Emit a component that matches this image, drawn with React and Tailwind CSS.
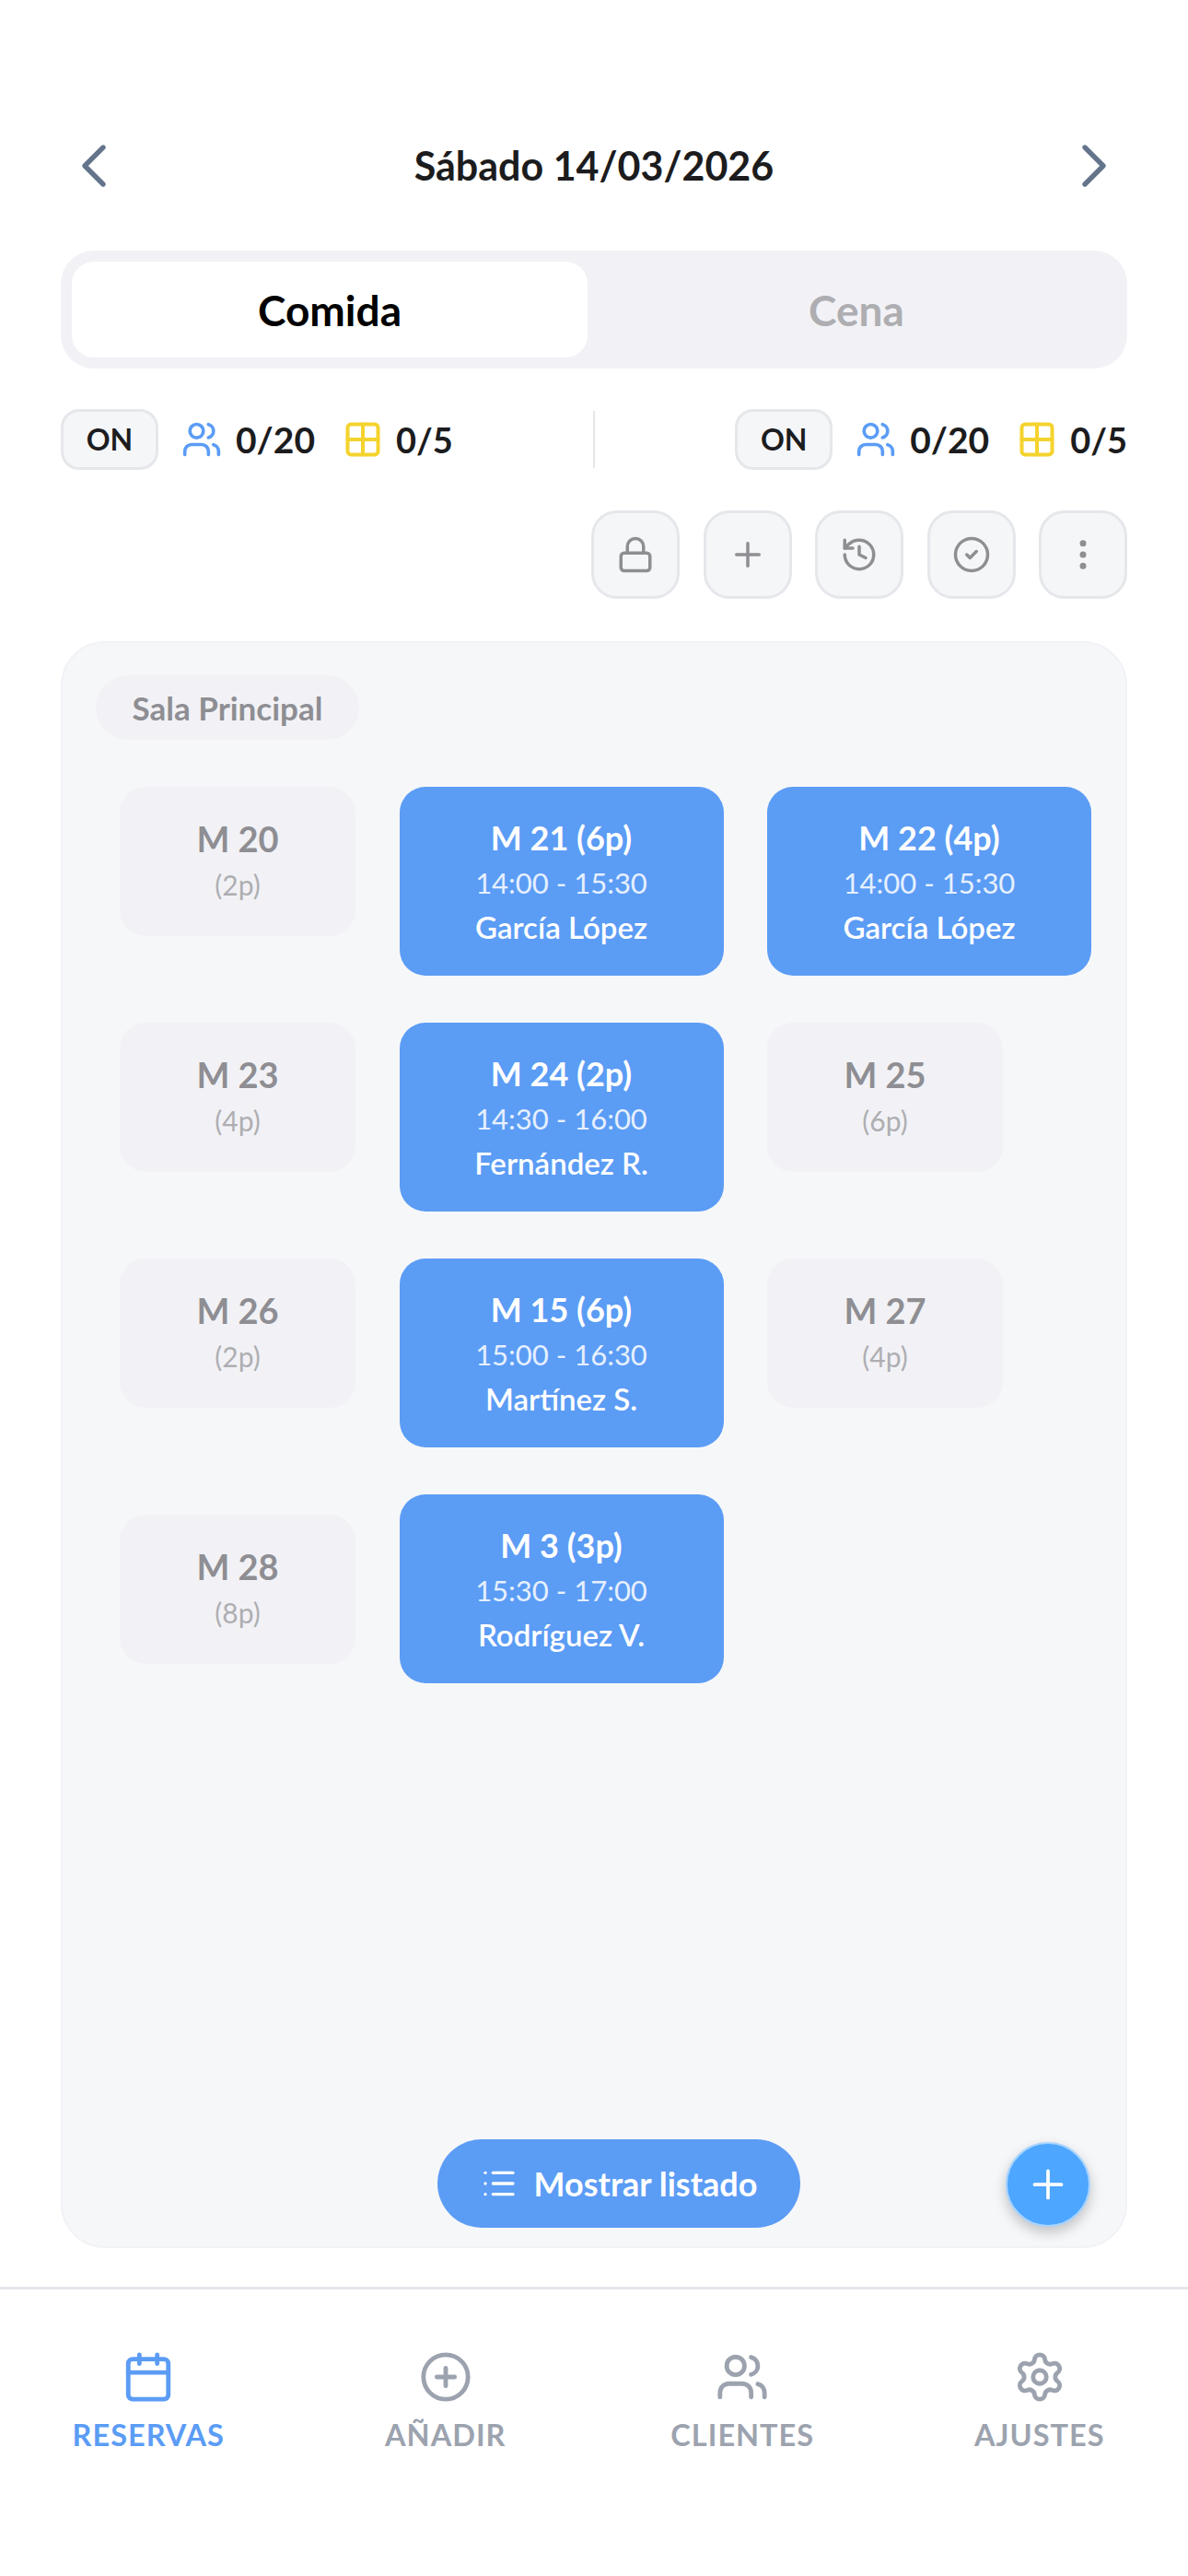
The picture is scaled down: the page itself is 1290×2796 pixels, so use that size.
import {
  Calendar,
  ChevronLeft,
  ChevronRight,
  CircleCheck,
  CirclePlus,
  EllipsisVertical,
  Grid2x2,
  History,
  List,
  Lock,
  Plus,
  Settings,
  Users,
} from "lucide-react";

const rows = [
  [
    { name: "M 20", seats: "(2p)" },
    { name: "M 21 (6p)", time: "14:00 - 15:30", guest: "García López" },
    { name: "M 22 (4p)", time: "14:00 - 15:30", guest: "García López" },
  ],
  [
    { name: "M 23", seats: "(4p)" },
    { name: "M 24 (2p)", time: "14:30 - 16:00", guest: "Fernández R." },
    { name: "M 25", seats: "(6p)" },
  ],
  [
    { name: "M 26", seats: "(2p)" },
    { name: "M 15 (6p)", time: "15:00 - 16:30", guest: "Martínez S." },
    { name: "M 27", seats: "(4p)" },
  ],
  [
    { name: "M 28", seats: "(8p)", center: true },
    { name: "M 3 (3p)", time: "15:30 - 17:00", guest: "Rodríguez V." },
  ],
];

const actions = [Lock, Plus, History, CircleCheck, EllipsisVertical];

const navItems = [
  { label: "RESERVAS", icon: Calendar, active: true },
  { label: "AÑADIR", icon: CirclePlus },
  { label: "CLIENTES", icon: Users },
  { label: "AJUSTES", icon: Settings },
];

const Stats = () => (
  <div className="flex items-center">
    <span className="flex h-[66px] w-[106px] items-center justify-center rounded-[20px] border-[3px] border-[#e5e7eb] bg-[#f5f6f8] text-[32px] font-bold text-[#1c1c1e]">
      ON
    </span>
    <Users className="ml-[25px] h-[44px] w-[44px] text-[#5b9cf5]" strokeWidth={2} />
    <span className="ml-[15px] text-[39px] font-bold text-[#1c1c1e]">0/20</span>
    <Grid2x2 className="ml-[30px] h-[44px] w-[44px] text-[#f5d32e]" strokeWidth={2.2} />
    <span className="ml-[14px] text-[38px] font-bold text-[#1c1c1e]">0/5</span>
  </div>
);

const TableCard = ({ table }) => {
  if (table.time) {
    return (
      <div className="flex h-[205px] w-[352px] flex-col items-center justify-center rounded-[28px] bg-[#5b9cf5] text-white">
        <span className="text-[36px] font-bold leading-[50px]">{table.name}</span>
        <span className="text-[31px] leading-[48px] text-white/85">{table.time}</span>
        <span className="text-[33px] font-semibold leading-[48px]">{table.guest}</span>
      </div>
    );
  }
  return (
    <div
      className={`flex h-[162px] w-[256px] flex-col items-center justify-center rounded-[28px] bg-[#f2f2f6] ${
        table.center ? "self-center" : "self-start"
      }`}
    >
      <span className="text-[38px] font-bold leading-[50px] text-[#8e8e93]">{table.name}</span>
      <span className="text-[30px] leading-[50px] text-[#aeaeb2]">{table.seats}</span>
    </div>
  );
};

export default function App() {
  return (
    <div
      className="flex h-[2796px] w-[1290px] flex-col bg-white"
      style={{ fontFamily: '"Lato", "Noto Sans", sans-serif' }}
    >
      <div className="flex h-[360px] flex-col px-[66px] pt-[140px]">
        <div className="-mx-[4px] flex h-[80px] items-center justify-between">
          <ChevronLeft className="h-[80px] w-[80px] text-[#64748b]" strokeWidth={1.6} />
          <h1 className="text-[43px] font-bold text-[#1c1c1e]">Sábado 14/03/2026</h1>
          <ChevronRight className="h-[80px] w-[80px] text-[#64748b]" strokeWidth={1.6} />
        </div>
        <div className="mt-[52px] flex h-[128px] shrink-0 rounded-[36px] bg-[#f2f2f6] p-[12px]">
          <div className="flex w-[560px] items-center justify-center rounded-[24px] bg-white text-[46px] font-bold text-black">
            Comida
          </div>
          <div className="flex flex-1 items-center justify-center pl-[10px] text-[46px] font-bold text-[#aeaeb2]">
            Cena
          </div>
        </div>
      </div>

      <div className="mt-[84px] flex h-[66px] items-center justify-between px-[66px]">
        <Stats />
        <div className="h-[62px] w-[2px] bg-[#e5e7eb]" />
        <Stats />
      </div>

      <div className="mt-[44px] flex justify-end gap-[25.5px] px-[66px]">
        {actions.map((Icon, i) => (
          <button
            key={i}
            className="flex h-[96px] w-[96px] items-center justify-center rounded-[28px] border-[3px] border-[#e5e7eb] bg-[#f5f6f8] text-[#8e8e93]"
          >
            <Icon className="h-[42px] w-[42px]" strokeWidth={2} />
          </button>
        ))}
      </div>

      <div className="relative mx-[66px] mt-[46px] h-[1744px] rounded-[48px] border-2 border-[#f2f2f6] bg-[#f6f7f9] pl-[36px] pt-[35px]">
        <span className="inline-flex h-[70px] w-[286px] items-center justify-center rounded-full bg-[#f2f2f6] text-[35px] font-bold text-[#8e8e93]">
          Sala Principal
        </span>
        <div className="ml-[26px] mt-[51px] flex flex-col gap-[51px]">
          {rows.map((row, i) => (
            <div key={i} className="flex gap-[47.5px]">
              {row.map((table) => (
                <TableCard key={table.name} table={table} />
              ))}
            </div>
          ))}
        </div>
        <button className="absolute bottom-[20px] left-[407px] flex h-[96px] w-[394px] items-center justify-center gap-[18px] rounded-full bg-[#5b9cf5] text-[36px] font-bold text-white">
          <List className="h-[40px] w-[40px]" strokeWidth={2} />
          Mostrar listado
        </button>
        <button className="absolute bottom-[21px] right-[38px] flex h-[92px] w-[92px] items-center justify-center rounded-full border-2 border-[#a8d4ff] bg-[#4da6ff] text-white shadow-[0_6px_14px_rgba(0,0,0,0.22)]">
          <Plus className="h-[50px] w-[50px]" strokeWidth={1.8} />
        </button>
      </div>

      <nav className="mt-[42px] grid flex-1 grid-cols-4 border-t-[3px] border-[#e5e7eb] pt-[66px]">
        {navItems.map(({ label, icon: Icon, active }) => (
          <div
            key={label}
            className={`flex flex-col items-center ${active ? "text-[#5b9cf5]" : "text-[#9ca3af]"}`}
          >
            <Icon className="h-[58px] w-[58px]" strokeWidth={2} />
            <span className="mt-[10px] text-[32.5px] font-bold tracking-[1px]">{label}</span>
          </div>
        ))}
      </nav>
    </div>
  );
}
